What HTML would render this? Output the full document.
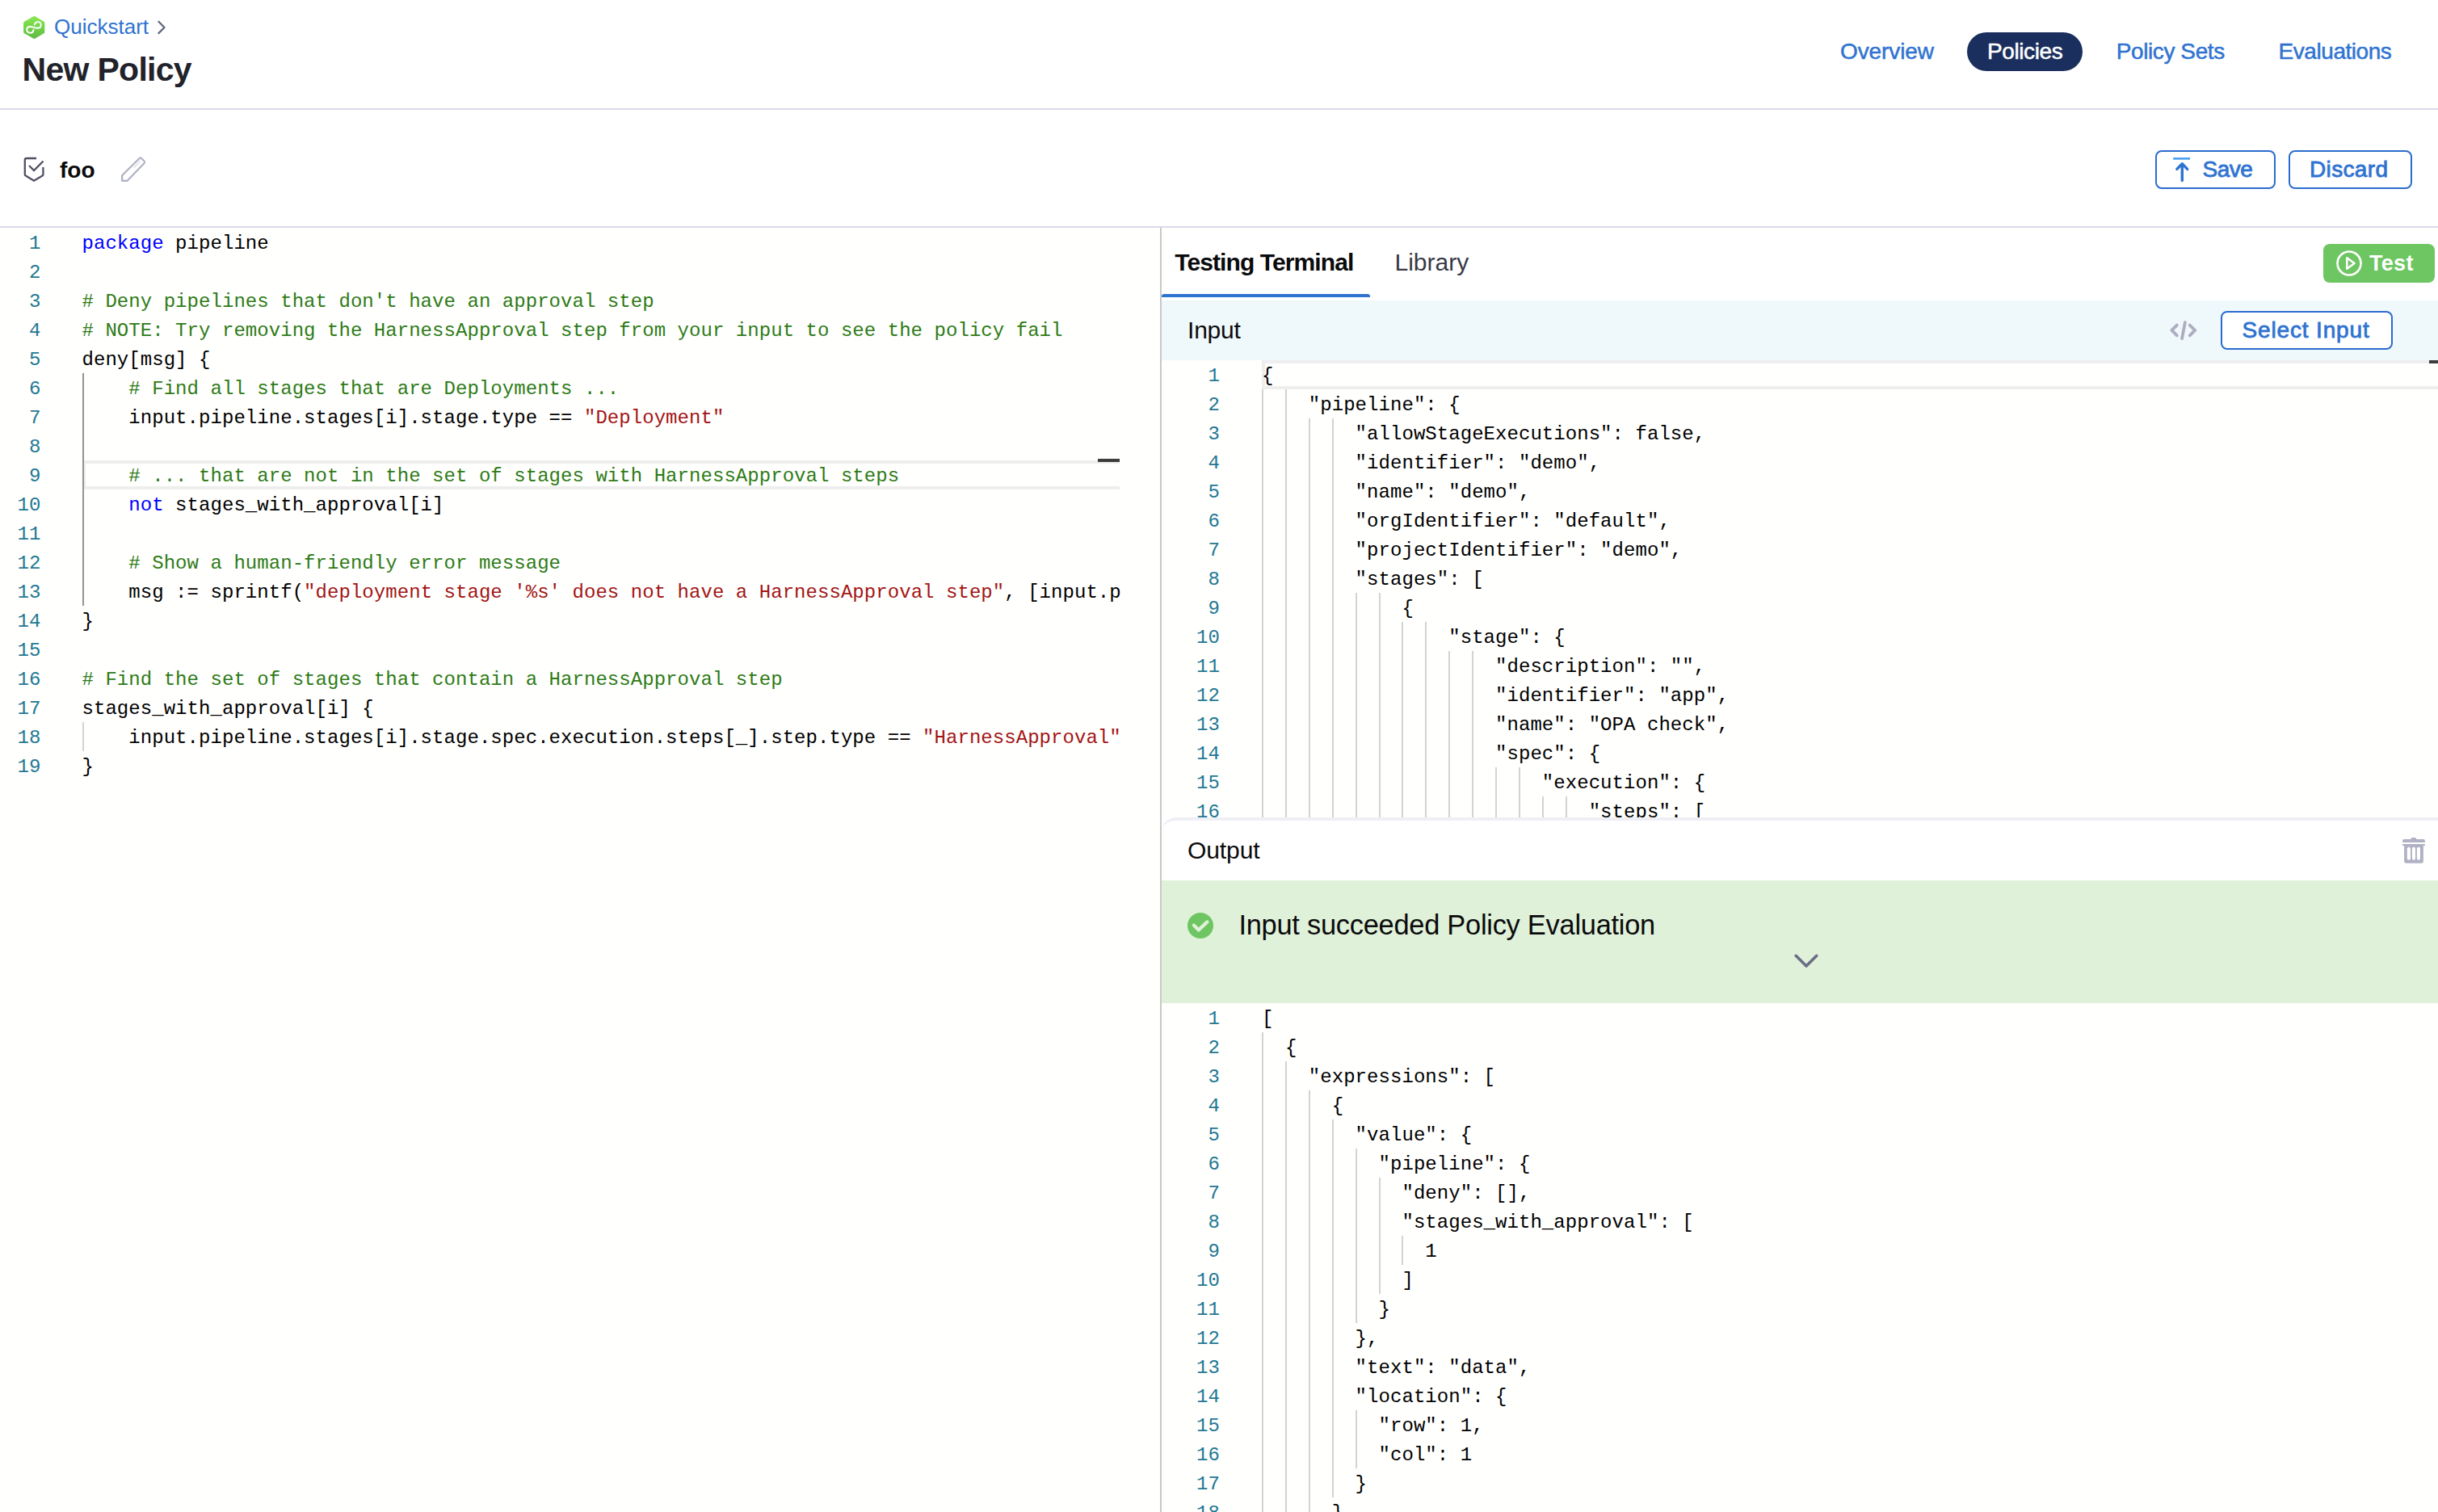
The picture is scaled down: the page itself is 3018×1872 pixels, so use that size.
<!DOCTYPE html><html><head><meta charset="utf-8"><style>
*{margin:0;padding:0;box-sizing:border-box}
html,body{width:3018px;height:1872px;overflow:hidden;background:#fff}
body{position:relative;font-family:"Liberation Sans",sans-serif}
.t{position:absolute;white-space:pre;line-height:1em}
.abs{position:absolute}
.ed{position:absolute;background:#fffffe;overflow:hidden}
.ln{position:absolute;text-align:right;font-family:"Liberation Mono",monospace;font-size:24px;line-height:36px;color:#237893;letter-spacing:0.05px}
.code{position:absolute;overflow:hidden;font-family:"Liberation Mono",monospace;font-size:24px;line-height:36px;color:#000;white-space:pre;letter-spacing:0.05px}
.cl{height:36px}
.g{position:absolute;width:2px;height:36px}
</style></head><body>
<div class="abs" style="left:0;top:0;width:3018px;height:134px;background:#fff"></div><div class="abs" style="left:0;top:134px;width:3018px;height:2px;background:#d9dae5"></div><svg class="abs" style="left:28px;top:19px" width="28" height="30" viewBox="0 0 28 30">
<defs><linearGradient id="lg" x1="0" y1="0" x2="0" y2="1"><stop offset="0" stop-color="#84e64e"/><stop offset="1" stop-color="#62bd45"/></linearGradient></defs>
<path d="M14.4 3 L25.3 9.4 L25.3 20.6 L14.4 27 L3.1 20.6 L3.1 9.4 Z" fill="url(#lg)" stroke="url(#lg)" stroke-width="4" stroke-linejoin="round"/>
<path d="M13.5 18 C13 21 11 22 9.5 21.8 C6.5 21.5 5 19.5 5.2 17.2 C5.5 15 7.5 13.9 9.5 14 C12.5 14.2 15.5 15.8 18.2 15.7 C21 15.6 22.8 14 22.8 11.9 C22.8 9.5 21 8 18.8 8.1 C16.5 8.2 15 10 14.7 11.6" fill="none" stroke="#fff" stroke-width="1.9" stroke-linecap="round"/>
</svg><div class="t" style="left:67px;top:20.39px;font-size:26px;color:#2f73d1;font-weight:400;">Quickstart</div>
<svg class="abs" style="left:193px;top:25px" width="14" height="19" viewBox="0 0 14 19"><path d="M3.4 1.8 L10.5 9 L3.4 16.1" fill="none" stroke="#60637b" stroke-width="2.2" stroke-linecap="round" stroke-linejoin="round"/></svg><div class="t" style="left:27.5px;top:65.59px;font-size:41px;color:#22222a;font-weight:700;letter-spacing:-0.7px;">New Policy</div>
<div class="t" style="left:2278px;top:50.09px;font-size:28px;color:#2f73d1;font-weight:400;letter-spacing:-0.1px;-webkit-text-stroke:0.5px #2f73d1;">Overview</div>
<div class="abs" style="left:2435px;top:40px;width:143px;height:48px;border-radius:24px;background:#1a2f5e"></div><div class="t" style="left:2460px;top:50.09px;font-size:28px;color:#ffffff;font-weight:400;letter-spacing:-0.4px;-webkit-text-stroke:0.5px #ffffff;">Policies</div>
<div class="t" style="left:2619.7px;top:50.09px;font-size:28px;color:#2f73d1;font-weight:400;letter-spacing:-0.4px;-webkit-text-stroke:0.5px #2f73d1;">Policy Sets</div>
<div class="t" style="left:2820.6px;top:50.09px;font-size:28px;color:#2f73d1;font-weight:400;letter-spacing:-0.45px;-webkit-text-stroke:0.5px #2f73d1;">Evaluations</div>
<div class="abs" style="left:0;top:136px;width:3018px;height:144px;background:#ffffff"></div><div class="abs" style="left:0;top:280px;width:3018px;height:2px;background:#d9dae5"></div><svg class="abs" style="left:29px;top:194px" width="28" height="32" viewBox="0 0 28 32">
<path d="M16 2 H4 Q1.8 2 1.8 4 V22 Q1.8 23 2.8 23.6 L13 29.8 L23.6 23.6 Q24.4 23 24.4 22 V13" fill="none" stroke="#4f5162" stroke-width="2.3" stroke-linejoin="round"/>
<path d="M7 11 L13 17 L24.5 5.5" fill="none" stroke="#4f5162" stroke-width="2.3"/>
</svg><div class="t" style="left:74px;top:196.99px;font-size:28px;color:#0b0b0d;font-weight:700;">foo</div>
<svg class="abs" style="left:148px;top:193px" width="34" height="34" viewBox="0 0 34 34">
<path d="M3.1 24.3 L24.6 2.9 Q25.8 1.9 27 3 L30.6 6.6 Q31.6 7.9 30.6 9.1 L9.4 30.9 H3.1 Z" fill="none" stroke="#adb0c4" stroke-width="2.1" stroke-linejoin="round"/>
<path d="M18.2 14.2 L25.3 6.9" stroke="#e3e4eb" stroke-width="1.8" stroke-linecap="round"/>
</svg><div class="abs" style="left:2668px;top:186px;width:149px;height:48px;border:2px solid #2a6cce;border-radius:8px;background:#fff"></div><svg class="abs" style="left:2688px;top:192px" width="26" height="36" viewBox="0 0 26 36">
<rect x="2.1" y="3" width="21" height="2.7" fill="#4da3f5"/>
<path d="M13.3 31.6 V11.5 M6.8 17.4 L13.3 10.7 L19.7 17.4" fill="none" stroke="#2f73d1" stroke-width="3.4" stroke-linecap="round" stroke-linejoin="round"/>
</svg><div class="t" style="left:2726.5px;top:196.09px;font-size:28px;color:#2f73d1;font-weight:400;letter-spacing:-0.5px;-webkit-text-stroke:0.8px #2f73d1;">Save</div>
<div class="abs" style="left:2833px;top:186px;width:153px;height:48px;border:2px solid #2a6cce;border-radius:8px;background:#fff"></div><div class="t" style="left:2859px;top:196.09px;font-size:28px;color:#2f73d1;font-weight:400;letter-spacing:0.35px;-webkit-text-stroke:0.8px #2f73d1;">Discard</div>
<div class="ed" style="left:0px;top:282px;width:1436px;height:1590px;">
<div class="abs" style="left:101.5px;top:288px;width:1284.5px;height:36px;border:4px solid #eeeeee;border-right:none"></div>
<div class="ln" style="left:0;width:50.5px;top:2px">1</div><div class="ln" style="left:0;width:50.5px;top:38px">2</div><div class="ln" style="left:0;width:50.5px;top:74px">3</div><div class="ln" style="left:0;width:50.5px;top:110px">4</div><div class="ln" style="left:0;width:50.5px;top:146px">5</div><div class="ln" style="left:0;width:50.5px;top:182px">6</div><div class="ln" style="left:0;width:50.5px;top:218px">7</div><div class="ln" style="left:0;width:50.5px;top:254px">8</div><div class="ln" style="left:0;width:50.5px;top:290px">9</div><div class="ln" style="left:0;width:50.5px;top:326px">10</div><div class="ln" style="left:0;width:50.5px;top:362px">11</div><div class="ln" style="left:0;width:50.5px;top:398px">12</div><div class="ln" style="left:0;width:50.5px;top:434px">13</div><div class="ln" style="left:0;width:50.5px;top:470px">14</div><div class="ln" style="left:0;width:50.5px;top:506px">15</div><div class="ln" style="left:0;width:50.5px;top:542px">16</div><div class="ln" style="left:0;width:50.5px;top:578px">17</div><div class="ln" style="left:0;width:50.5px;top:614px">18</div><div class="ln" style="left:0;width:50.5px;top:650px">19</div>
<div class="code" style="left:101.5px;top:2px;width:1285px"><div class="cl"><span style="color:#0000ff">package</span> pipeline</div><div class="cl">&#8203;</div><div class="cl"><span style="color:#2e7b16"># Deny pipelines that don&#x27;t have an approval step</span></div><div class="cl"><span style="color:#2e7b16"># NOTE: Try removing the HarnessApproval step from your input to see the policy fail</span></div><div class="cl">deny[msg] {</div><div class="cl">    <span style="color:#2e7b16"># Find all stages that are Deployments ...</span></div><div class="cl">    input.pipeline.stages[i].stage.type == <span style="color:#a31515">&quot;Deployment&quot;</span></div><div class="cl">&#8203;</div><div class="cl">    <span style="color:#2e7b16"># ... that are not in the set of stages with HarnessApproval steps</span></div><div class="cl">    <span style="color:#0000ff">not</span> stages_with_approval[i]</div><div class="cl">&#8203;</div><div class="cl">    <span style="color:#2e7b16"># Show a human-friendly error message</span></div><div class="cl">    msg := sprintf(<span style="color:#a31515">&quot;deployment stage &#x27;%s&#x27; does not have a HarnessApproval step&quot;</span>, [input.p</div><div class="cl">}</div><div class="cl">&#8203;</div><div class="cl"><span style="color:#2e7b16"># Find the set of stages that contain a HarnessApproval step</span></div><div class="cl">stages_with_approval[i] {</div><div class="cl">    input.pipeline.stages[i].stage.spec.execution.steps[_].step.type == <span style="color:#a31515">&quot;HarnessApproval&quot;</span></div><div class="cl">}</div></div>
</div>
<div class="abs" style="left:101.5px;top:462px;width:2px;height:288px;background:#939393"></div><div class="abs" style="left:101.5px;top:894px;width:2px;height:36px;background:#d3d3d3"></div><div class="abs" style="left:1359px;top:568px;width:27px;height:4px;background:#3c3c3c"></div><div class="abs" style="left:1436px;top:282px;width:2px;height:1590px;background:#c8c8c8"></div><div class="abs" style="left:1438px;top:282px;width:1580px;height:90px;background:#fff"></div><div class="t" style="left:1454.2px;top:309.90px;font-size:30px;color:#0b0b0d;font-weight:700;letter-spacing:-0.9px;">Testing Terminal</div>
<div class="t" style="left:1726.5px;top:309.90px;font-size:30px;color:#383946;font-weight:400;letter-spacing:0px;">Library</div>
<div class="abs" style="left:1438px;top:364px;width:258px;height:4px;background:#2f73d1;border-radius:3px 3px 0 0"></div><div class="abs" style="left:2876px;top:302px;width:138px;height:48px;border-radius:8px;background:#6ec662"></div><svg class="abs" style="left:2890px;top:308px" width="36" height="36" viewBox="0 0 36 36">
<circle cx="18" cy="18" r="14.5" fill="none" stroke="#fff" stroke-width="2.6"/>
<path d="M15.3 11.3 L24.5 18 L15.3 24.7 Z" fill="none" stroke="#fff" stroke-width="2.6" stroke-linejoin="round"/>
</svg><div class="t" style="left:2933px;top:313.44px;font-size:27px;color:#ffffff;font-weight:700;letter-spacing:0.3px;">Test</div>
<div class="abs" style="left:1438px;top:372px;width:1580px;height:74px;background:#eff8fb"></div><div class="t" style="left:1470px;top:393.60px;font-size:30px;color:#0b0b0d;font-weight:400;letter-spacing:-0.2px;">Input</div>
<svg class="abs" style="left:2685px;top:394px" width="36" height="30" viewBox="0 0 36 30">
<path d="M9.8 8.6 L3.4 14.9 L9.8 21.3 M25.7 8.6 L32.2 14.9 L25.7 21.3 M19.9 5 L16.1 25.1" fill="none" stroke="#adadc0" stroke-width="3.8" stroke-linecap="round" stroke-linejoin="round"/>
</svg><div class="abs" style="left:2749px;top:385px;width:213px;height:48px;border:2px solid #2a6cce;border-radius:8px;background:#fff"></div><div class="t" style="left:2775.5px;top:395.09px;font-size:28px;color:#2f73d1;font-weight:400;letter-spacing:0.85px;-webkit-text-stroke:0.8px #2f73d1;">Select Input</div>
<div class="ed" style="left:1438px;top:446px;width:1580px;height:566px;">
<div class="abs" style="left:124px;top:0px;width:1456px;height:36px;border:4px solid #eeeeee;border-right:none"></div><div class="abs" style="left:1569px;top:0px;width:11px;height:4px;background:#3c3c3c"></div><div class="g" style="left:124.0px;top:36px;background:#d3d3d3"></div><div class="g" style="left:152.9px;top:36px;background:#d3d3d3"></div><div class="g" style="left:124.0px;top:72px;background:#d3d3d3"></div><div class="g" style="left:152.9px;top:72px;background:#d3d3d3"></div><div class="g" style="left:181.8px;top:72px;background:#d3d3d3"></div><div class="g" style="left:210.7px;top:72px;background:#d3d3d3"></div><div class="g" style="left:124.0px;top:108px;background:#d3d3d3"></div><div class="g" style="left:152.9px;top:108px;background:#d3d3d3"></div><div class="g" style="left:181.8px;top:108px;background:#d3d3d3"></div><div class="g" style="left:210.7px;top:108px;background:#d3d3d3"></div><div class="g" style="left:124.0px;top:144px;background:#d3d3d3"></div><div class="g" style="left:152.9px;top:144px;background:#d3d3d3"></div><div class="g" style="left:181.8px;top:144px;background:#d3d3d3"></div><div class="g" style="left:210.7px;top:144px;background:#d3d3d3"></div><div class="g" style="left:124.0px;top:180px;background:#d3d3d3"></div><div class="g" style="left:152.9px;top:180px;background:#d3d3d3"></div><div class="g" style="left:181.8px;top:180px;background:#d3d3d3"></div><div class="g" style="left:210.7px;top:180px;background:#d3d3d3"></div><div class="g" style="left:124.0px;top:216px;background:#d3d3d3"></div><div class="g" style="left:152.9px;top:216px;background:#d3d3d3"></div><div class="g" style="left:181.8px;top:216px;background:#d3d3d3"></div><div class="g" style="left:210.7px;top:216px;background:#d3d3d3"></div><div class="g" style="left:124.0px;top:252px;background:#d3d3d3"></div><div class="g" style="left:152.9px;top:252px;background:#d3d3d3"></div><div class="g" style="left:181.8px;top:252px;background:#d3d3d3"></div><div class="g" style="left:210.7px;top:252px;background:#d3d3d3"></div><div class="g" style="left:124.0px;top:288px;background:#d3d3d3"></div><div class="g" style="left:152.9px;top:288px;background:#d3d3d3"></div><div class="g" style="left:181.8px;top:288px;background:#d3d3d3"></div><div class="g" style="left:210.7px;top:288px;background:#d3d3d3"></div><div class="g" style="left:239.6px;top:288px;background:#d3d3d3"></div><div class="g" style="left:268.5px;top:288px;background:#d3d3d3"></div><div class="g" style="left:124.0px;top:324px;background:#d3d3d3"></div><div class="g" style="left:152.9px;top:324px;background:#d3d3d3"></div><div class="g" style="left:181.8px;top:324px;background:#d3d3d3"></div><div class="g" style="left:210.7px;top:324px;background:#d3d3d3"></div><div class="g" style="left:239.6px;top:324px;background:#d3d3d3"></div><div class="g" style="left:268.5px;top:324px;background:#d3d3d3"></div><div class="g" style="left:297.4px;top:324px;background:#d3d3d3"></div><div class="g" style="left:326.3px;top:324px;background:#d3d3d3"></div><div class="g" style="left:124.0px;top:360px;background:#d3d3d3"></div><div class="g" style="left:152.9px;top:360px;background:#d3d3d3"></div><div class="g" style="left:181.8px;top:360px;background:#d3d3d3"></div><div class="g" style="left:210.7px;top:360px;background:#d3d3d3"></div><div class="g" style="left:239.6px;top:360px;background:#d3d3d3"></div><div class="g" style="left:268.5px;top:360px;background:#d3d3d3"></div><div class="g" style="left:297.4px;top:360px;background:#d3d3d3"></div><div class="g" style="left:326.3px;top:360px;background:#d3d3d3"></div><div class="g" style="left:355.2px;top:360px;background:#d3d3d3"></div><div class="g" style="left:384.1px;top:360px;background:#d3d3d3"></div><div class="g" style="left:124.0px;top:396px;background:#d3d3d3"></div><div class="g" style="left:152.9px;top:396px;background:#d3d3d3"></div><div class="g" style="left:181.8px;top:396px;background:#d3d3d3"></div><div class="g" style="left:210.7px;top:396px;background:#d3d3d3"></div><div class="g" style="left:239.6px;top:396px;background:#d3d3d3"></div><div class="g" style="left:268.5px;top:396px;background:#d3d3d3"></div><div class="g" style="left:297.4px;top:396px;background:#d3d3d3"></div><div class="g" style="left:326.3px;top:396px;background:#d3d3d3"></div><div class="g" style="left:355.2px;top:396px;background:#d3d3d3"></div><div class="g" style="left:384.1px;top:396px;background:#d3d3d3"></div><div class="g" style="left:124.0px;top:432px;background:#d3d3d3"></div><div class="g" style="left:152.9px;top:432px;background:#d3d3d3"></div><div class="g" style="left:181.8px;top:432px;background:#d3d3d3"></div><div class="g" style="left:210.7px;top:432px;background:#d3d3d3"></div><div class="g" style="left:239.6px;top:432px;background:#d3d3d3"></div><div class="g" style="left:268.5px;top:432px;background:#d3d3d3"></div><div class="g" style="left:297.4px;top:432px;background:#d3d3d3"></div><div class="g" style="left:326.3px;top:432px;background:#d3d3d3"></div><div class="g" style="left:355.2px;top:432px;background:#d3d3d3"></div><div class="g" style="left:384.1px;top:432px;background:#d3d3d3"></div><div class="g" style="left:124.0px;top:468px;background:#d3d3d3"></div><div class="g" style="left:152.9px;top:468px;background:#d3d3d3"></div><div class="g" style="left:181.8px;top:468px;background:#d3d3d3"></div><div class="g" style="left:210.7px;top:468px;background:#d3d3d3"></div><div class="g" style="left:239.6px;top:468px;background:#d3d3d3"></div><div class="g" style="left:268.5px;top:468px;background:#d3d3d3"></div><div class="g" style="left:297.4px;top:468px;background:#d3d3d3"></div><div class="g" style="left:326.3px;top:468px;background:#d3d3d3"></div><div class="g" style="left:355.2px;top:468px;background:#d3d3d3"></div><div class="g" style="left:384.1px;top:468px;background:#d3d3d3"></div><div class="g" style="left:124.0px;top:504px;background:#d3d3d3"></div><div class="g" style="left:152.9px;top:504px;background:#d3d3d3"></div><div class="g" style="left:181.8px;top:504px;background:#d3d3d3"></div><div class="g" style="left:210.7px;top:504px;background:#d3d3d3"></div><div class="g" style="left:239.6px;top:504px;background:#d3d3d3"></div><div class="g" style="left:268.5px;top:504px;background:#d3d3d3"></div><div class="g" style="left:297.4px;top:504px;background:#d3d3d3"></div><div class="g" style="left:326.3px;top:504px;background:#d3d3d3"></div><div class="g" style="left:355.2px;top:504px;background:#d3d3d3"></div><div class="g" style="left:384.1px;top:504px;background:#d3d3d3"></div><div class="g" style="left:413.0px;top:504px;background:#d3d3d3"></div><div class="g" style="left:441.9px;top:504px;background:#d3d3d3"></div><div class="g" style="left:124.0px;top:540px;background:#d3d3d3"></div><div class="g" style="left:152.9px;top:540px;background:#d3d3d3"></div><div class="g" style="left:181.8px;top:540px;background:#d3d3d3"></div><div class="g" style="left:210.7px;top:540px;background:#d3d3d3"></div><div class="g" style="left:239.6px;top:540px;background:#d3d3d3"></div><div class="g" style="left:268.5px;top:540px;background:#d3d3d3"></div><div class="g" style="left:297.4px;top:540px;background:#d3d3d3"></div><div class="g" style="left:326.3px;top:540px;background:#d3d3d3"></div><div class="g" style="left:355.2px;top:540px;background:#d3d3d3"></div><div class="g" style="left:384.1px;top:540px;background:#d3d3d3"></div><div class="g" style="left:413.0px;top:540px;background:#d3d3d3"></div><div class="g" style="left:441.9px;top:540px;background:#d3d3d3"></div><div class="g" style="left:470.8px;top:540px;background:#d3d3d3"></div><div class="g" style="left:499.7px;top:540px;background:#d3d3d3"></div>
<div class="ln" style="left:0;width:72px;top:2px">1</div><div class="ln" style="left:0;width:72px;top:38px">2</div><div class="ln" style="left:0;width:72px;top:74px">3</div><div class="ln" style="left:0;width:72px;top:110px">4</div><div class="ln" style="left:0;width:72px;top:146px">5</div><div class="ln" style="left:0;width:72px;top:182px">6</div><div class="ln" style="left:0;width:72px;top:218px">7</div><div class="ln" style="left:0;width:72px;top:254px">8</div><div class="ln" style="left:0;width:72px;top:290px">9</div><div class="ln" style="left:0;width:72px;top:326px">10</div><div class="ln" style="left:0;width:72px;top:362px">11</div><div class="ln" style="left:0;width:72px;top:398px">12</div><div class="ln" style="left:0;width:72px;top:434px">13</div><div class="ln" style="left:0;width:72px;top:470px">14</div><div class="ln" style="left:0;width:72px;top:506px">15</div><div class="ln" style="left:0;width:72px;top:542px">16</div>
<div class="code" style="left:124px;top:2px;width:1456px"><div class="cl">{</div><div class="cl">    &quot;pipeline&quot;: {</div><div class="cl">        &quot;allowStageExecutions&quot;: false,</div><div class="cl">        &quot;identifier&quot;: &quot;demo&quot;,</div><div class="cl">        &quot;name&quot;: &quot;demo&quot;,</div><div class="cl">        &quot;orgIdentifier&quot;: &quot;default&quot;,</div><div class="cl">        &quot;projectIdentifier&quot;: &quot;demo&quot;,</div><div class="cl">        &quot;stages&quot;: [</div><div class="cl">            {</div><div class="cl">                &quot;stage&quot;: {</div><div class="cl">                    &quot;description&quot;: &quot;&quot;,</div><div class="cl">                    &quot;identifier&quot;: &quot;app&quot;,</div><div class="cl">                    &quot;name&quot;: &quot;OPA check&quot;,</div><div class="cl">                    &quot;spec&quot;: {</div><div class="cl">                        &quot;execution&quot;: {</div><div class="cl">                            &quot;steps&quot;: [</div></div>
</div>
<div class="abs" style="left:1438px;top:1012px;width:1600px;height:880px;background:#fff;border-top:4px solid #efeff6;border-top-left-radius:18px"></div><div class="t" style="left:1470px;top:1038.10px;font-size:30px;color:#0b0b0d;font-weight:400;letter-spacing:-0.1px;">Output</div>
<svg class="abs" style="left:2972px;top:1035px" width="32" height="36" viewBox="0 0 32 36">
<path d="M2 7.9 V6 Q2 3.9 4.2 3.9 H12.2 Q12.6 2.1 14.3 2.1 H17.3 Q19 2.1 19.3 3.9 H27.8 Q29.9 3.9 29.9 6 V7.9 Z" fill="#b0b1c4"/>
<rect x="2" y="10" width="27.8" height="2.2" fill="#b0b1c4"/>
<path d="M4.1 10 H27.9 V31 Q27.9 33.7 25.2 33.7 H6.8 Q4.1 33.7 4.1 31 Z" fill="#b0b1c4"/>
<rect x="7.8" y="13.7" width="4.2" height="16.1" rx="2" fill="#fff"/><rect x="13.9" y="13.7" width="4.1" height="16.1" rx="2" fill="#fff"/><rect x="19.9" y="13.7" width="4.1" height="16.1" rx="2" fill="#fff"/>
</svg><div class="abs" style="left:1438px;top:1090px;width:1580px;height:152px;background:#dff1d8"></div><svg class="abs" style="left:1470px;top:1130px" width="32" height="32" viewBox="0 0 32 32">
<circle cx="16" cy="16" r="16" fill="#6ec662"/>
<path d="M7.8 15.6 L13.8 21.4 L24.4 11.4" fill="none" stroke="#dff1d8" stroke-width="4.2" stroke-linecap="round" stroke-linejoin="round"/>
</svg><div class="t" style="left:1533.4px;top:1127.57px;font-size:34.4px;color:#0b0b0d;font-weight:400;letter-spacing:-0.25px;">Input succeeded Policy Evaluation</div>
<svg class="abs" style="left:2219px;top:1179px" width="34" height="22" viewBox="0 0 34 22"><path d="M4.2 4.3 L17 17 L29.8 4.3" fill="none" stroke="#6b6d85" stroke-width="3.6" stroke-linecap="round" stroke-linejoin="round"/></svg><div class="ed" style="left:1438px;top:1242px;width:1580px;height:630px;">
<div class="g" style="left:124.0px;top:36px;background:#d3d3d3"></div><div class="g" style="left:124.0px;top:72px;background:#d3d3d3"></div><div class="g" style="left:152.9px;top:72px;background:#d3d3d3"></div><div class="g" style="left:124.0px;top:108px;background:#d3d3d3"></div><div class="g" style="left:152.9px;top:108px;background:#d3d3d3"></div><div class="g" style="left:181.8px;top:108px;background:#d3d3d3"></div><div class="g" style="left:124.0px;top:144px;background:#d3d3d3"></div><div class="g" style="left:152.9px;top:144px;background:#d3d3d3"></div><div class="g" style="left:181.8px;top:144px;background:#d3d3d3"></div><div class="g" style="left:210.7px;top:144px;background:#d3d3d3"></div><div class="g" style="left:124.0px;top:180px;background:#d3d3d3"></div><div class="g" style="left:152.9px;top:180px;background:#d3d3d3"></div><div class="g" style="left:181.8px;top:180px;background:#d3d3d3"></div><div class="g" style="left:210.7px;top:180px;background:#d3d3d3"></div><div class="g" style="left:239.6px;top:180px;background:#d3d3d3"></div><div class="g" style="left:124.0px;top:216px;background:#d3d3d3"></div><div class="g" style="left:152.9px;top:216px;background:#d3d3d3"></div><div class="g" style="left:181.8px;top:216px;background:#d3d3d3"></div><div class="g" style="left:210.7px;top:216px;background:#d3d3d3"></div><div class="g" style="left:239.6px;top:216px;background:#d3d3d3"></div><div class="g" style="left:268.5px;top:216px;background:#d3d3d3"></div><div class="g" style="left:124.0px;top:252px;background:#d3d3d3"></div><div class="g" style="left:152.9px;top:252px;background:#d3d3d3"></div><div class="g" style="left:181.8px;top:252px;background:#d3d3d3"></div><div class="g" style="left:210.7px;top:252px;background:#d3d3d3"></div><div class="g" style="left:239.6px;top:252px;background:#d3d3d3"></div><div class="g" style="left:268.5px;top:252px;background:#d3d3d3"></div><div class="g" style="left:124.0px;top:288px;background:#d3d3d3"></div><div class="g" style="left:152.9px;top:288px;background:#d3d3d3"></div><div class="g" style="left:181.8px;top:288px;background:#d3d3d3"></div><div class="g" style="left:210.7px;top:288px;background:#d3d3d3"></div><div class="g" style="left:239.6px;top:288px;background:#d3d3d3"></div><div class="g" style="left:268.5px;top:288px;background:#d3d3d3"></div><div class="g" style="left:297.4px;top:288px;background:#d3d3d3"></div><div class="g" style="left:124.0px;top:324px;background:#d3d3d3"></div><div class="g" style="left:152.9px;top:324px;background:#d3d3d3"></div><div class="g" style="left:181.8px;top:324px;background:#d3d3d3"></div><div class="g" style="left:210.7px;top:324px;background:#d3d3d3"></div><div class="g" style="left:239.6px;top:324px;background:#d3d3d3"></div><div class="g" style="left:268.5px;top:324px;background:#d3d3d3"></div><div class="g" style="left:124.0px;top:360px;background:#d3d3d3"></div><div class="g" style="left:152.9px;top:360px;background:#d3d3d3"></div><div class="g" style="left:181.8px;top:360px;background:#d3d3d3"></div><div class="g" style="left:210.7px;top:360px;background:#d3d3d3"></div><div class="g" style="left:239.6px;top:360px;background:#d3d3d3"></div><div class="g" style="left:124.0px;top:396px;background:#d3d3d3"></div><div class="g" style="left:152.9px;top:396px;background:#d3d3d3"></div><div class="g" style="left:181.8px;top:396px;background:#d3d3d3"></div><div class="g" style="left:210.7px;top:396px;background:#d3d3d3"></div><div class="g" style="left:124.0px;top:432px;background:#d3d3d3"></div><div class="g" style="left:152.9px;top:432px;background:#d3d3d3"></div><div class="g" style="left:181.8px;top:432px;background:#d3d3d3"></div><div class="g" style="left:210.7px;top:432px;background:#d3d3d3"></div><div class="g" style="left:124.0px;top:468px;background:#d3d3d3"></div><div class="g" style="left:152.9px;top:468px;background:#d3d3d3"></div><div class="g" style="left:181.8px;top:468px;background:#d3d3d3"></div><div class="g" style="left:210.7px;top:468px;background:#d3d3d3"></div><div class="g" style="left:124.0px;top:504px;background:#d3d3d3"></div><div class="g" style="left:152.9px;top:504px;background:#d3d3d3"></div><div class="g" style="left:181.8px;top:504px;background:#d3d3d3"></div><div class="g" style="left:210.7px;top:504px;background:#d3d3d3"></div><div class="g" style="left:239.6px;top:504px;background:#d3d3d3"></div><div class="g" style="left:124.0px;top:540px;background:#d3d3d3"></div><div class="g" style="left:152.9px;top:540px;background:#d3d3d3"></div><div class="g" style="left:181.8px;top:540px;background:#d3d3d3"></div><div class="g" style="left:210.7px;top:540px;background:#d3d3d3"></div><div class="g" style="left:239.6px;top:540px;background:#d3d3d3"></div><div class="g" style="left:124.0px;top:576px;background:#d3d3d3"></div><div class="g" style="left:152.9px;top:576px;background:#d3d3d3"></div><div class="g" style="left:181.8px;top:576px;background:#d3d3d3"></div><div class="g" style="left:210.7px;top:576px;background:#d3d3d3"></div><div class="g" style="left:124.0px;top:612px;background:#d3d3d3"></div><div class="g" style="left:152.9px;top:612px;background:#d3d3d3"></div><div class="g" style="left:181.8px;top:612px;background:#d3d3d3"></div><div class="g" style="left:124.0px;top:648px;background:#d3d3d3"></div><div class="g" style="left:152.9px;top:648px;background:#d3d3d3"></div>
<div class="ln" style="left:0;width:72px;top:2px">1</div><div class="ln" style="left:0;width:72px;top:38px">2</div><div class="ln" style="left:0;width:72px;top:74px">3</div><div class="ln" style="left:0;width:72px;top:110px">4</div><div class="ln" style="left:0;width:72px;top:146px">5</div><div class="ln" style="left:0;width:72px;top:182px">6</div><div class="ln" style="left:0;width:72px;top:218px">7</div><div class="ln" style="left:0;width:72px;top:254px">8</div><div class="ln" style="left:0;width:72px;top:290px">9</div><div class="ln" style="left:0;width:72px;top:326px">10</div><div class="ln" style="left:0;width:72px;top:362px">11</div><div class="ln" style="left:0;width:72px;top:398px">12</div><div class="ln" style="left:0;width:72px;top:434px">13</div><div class="ln" style="left:0;width:72px;top:470px">14</div><div class="ln" style="left:0;width:72px;top:506px">15</div><div class="ln" style="left:0;width:72px;top:542px">16</div><div class="ln" style="left:0;width:72px;top:578px">17</div><div class="ln" style="left:0;width:72px;top:614px">18</div>
<div class="code" style="left:124px;top:2px;width:1456px"><div class="cl">[</div><div class="cl">  {</div><div class="cl">    &quot;expressions&quot;: [</div><div class="cl">      {</div><div class="cl">        &quot;value&quot;: {</div><div class="cl">          &quot;pipeline&quot;: {</div><div class="cl">            &quot;deny&quot;: [],</div><div class="cl">            &quot;stages_with_approval&quot;: [</div><div class="cl">              1</div><div class="cl">            ]</div><div class="cl">          }</div><div class="cl">        },</div><div class="cl">        &quot;text&quot;: &quot;data&quot;,</div><div class="cl">        &quot;location&quot;: {</div><div class="cl">          &quot;row&quot;: 1,</div><div class="cl">          &quot;col&quot;: 1</div><div class="cl">        }</div><div class="cl">      }</div><div class="cl">    ]</div></div>
</div>
</body></html>
